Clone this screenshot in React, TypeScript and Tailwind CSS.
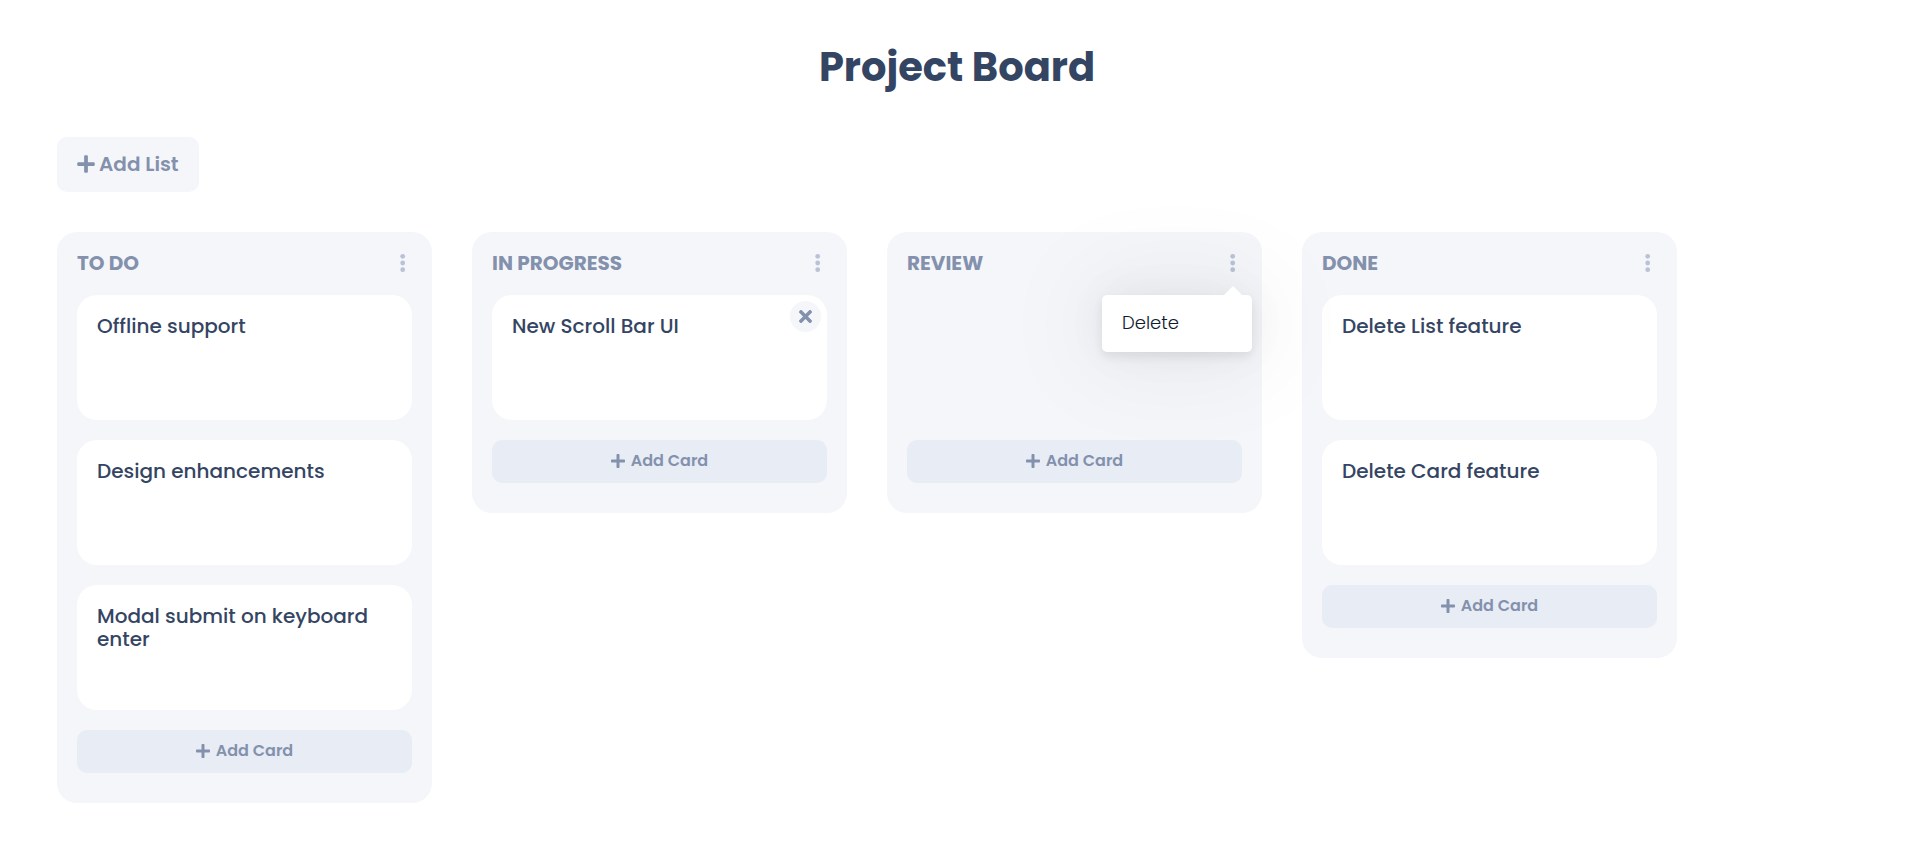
import { FaPlus, FaTimes } from "react-icons/fa";

type Card = { title: string; active?: boolean };
type List = { name: string; cards: Card[]; menuOpen?: boolean };

const lists: List[] = [
  {
    name: "TO DO",
    cards: [
      { title: "Offline support" },
      { title: "Design enhancements" },
      { title: "Modal submit on keyboard enter" },
    ],
  },
  { name: "IN PROGRESS", cards: [{ title: "New Scroll Bar UI", active: true }] },
  { name: "REVIEW", cards: [], menuOpen: true },
  {
    name: "DONE",
    cards: [{ title: "Delete List feature" }, { title: "Delete Card feature" }],
  },
];

function DotsIcon() {
  return (
    <svg viewBox="0 0 6 20" className="h-5 w-1.5" fill="currentColor" aria-hidden="true">
      <circle cx="2.7" cy="3.3" r="2.4" />
      <circle cx="2.7" cy="10" r="2.4" />
      <circle cx="2.7" cy="16.7" r="2.4" />
    </svg>
  );
}

function ListMenu() {
  return (
    <div
      role="menu"
      className="absolute top-[63px] -right-2.5 z-10 w-[150px] rounded-[5px] bg-white shadow-[0_5px_10px_rgba(0,0,0,0.07),0_0_40px_rgba(0,0,0,0.06),0_0_100px_20px_rgba(0,0,0,0.05)]"
    >
      <svg viewBox="0 0 18 9" className="absolute -top-[9px] right-2.5 h-[9px] w-[18px] fill-white" aria-hidden="true">
        <path d="M0 9 L9 0 L18 9 Z" />
      </svg>
      <button role="menuitem" className="block h-[57px] w-full px-5 pb-0.5 text-left text-lg font-light text-[#0f1a30]">
        Delete
      </button>
    </div>
  );
}

function CardItem({ card }: { card: Card }) {
  return (
    <li className="relative min-h-[125px] rounded-[20px] bg-white p-5">
      <p className="text-xl leading-[23px] font-medium text-[#344563]">{card.title}</p>
      {card.active && (
        <button
          aria-label="Delete card"
          className="absolute top-1.5 right-1.5 flex size-[31px] items-center justify-center rounded-full bg-[#f5f6fa] text-[#8391ad]"
        >
          <FaTimes className="size-[19px]" />
        </button>
      )}
    </li>
  );
}

function BoardList({ list }: { list: List }) {
  return (
    <section className="w-[375px] shrink-0 rounded-[20px] bg-[#f5f6fa] px-5 pb-[30px]">
      <header className="relative flex h-[63px] items-center justify-between pr-1.5 pb-0.5">
        <h2 className="text-xl leading-6 font-bold text-[#8391ad]">{list.name}</h2>
        <button aria-label="List options" className="text-[#b9c2d6]">
          <DotsIcon />
        </button>
        {list.menuOpen && <ListMenu />}
      </header>
      <ul className="flex min-h-[125px] flex-col gap-5">
        {list.cards.map((card) => (
          <CardItem key={card.title} card={card} />
        ))}
      </ul>
      <button className="mt-5 flex h-[43px] w-full items-center justify-center gap-1.5 rounded-[10px] bg-[#e7ecf5] pb-0.5 text-base font-semibold text-[#8391ad]">
        <FaPlus className="h-4 w-3.5" />
        Add Card
      </button>
    </section>
  );
}

export default function App() {
  return (
    <main className="min-h-screen bg-white pt-[37px] pr-[54px] pb-10 pl-[57px] font-[Poppins,Inter,sans-serif]">
      <h1 className="text-center text-[40px] leading-[60px] font-bold text-[#344563]">Project Board</h1>
      <button className="mt-10 flex h-[55px] items-center gap-1 rounded-[10px] bg-[#f5f6fa] px-5 pb-0.5 text-xl font-semibold text-[#8391ad]">
        <FaPlus className="h-5 w-[18px]" />
        Add List
      </button>
      <div className="mt-10 flex items-start gap-10">
        {lists.map((list) => (
          <BoardList key={list.name} list={list} />
        ))}
      </div>
    </main>
  );
}
